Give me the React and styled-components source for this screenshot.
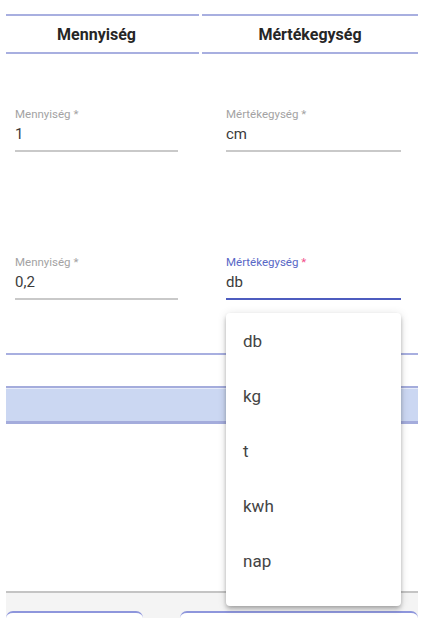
import styled, { createGlobalStyle } from "styled-components";

const GlobalStyle = createGlobalStyle`
  html, body {
    margin: 0;
    padding: 0;
    background: #ffffff;
  }
  body {
    font-family: Roboto, "Noto Sans", Arial, sans-serif;
    -webkit-font-smoothing: antialiased;
  }
`;

const units = ["db", "kg", "t", "kwh", "nap"];

const rows = [
  { amount: "1", unit: "cm", focused: false },
  { amount: "0,2", unit: "db", focused: true },
];

const Page = styled.div`
  width: 412px;
  margin-left: 6px;
  padding-top: 14px;
`;

const Grid = styled.div`
  display: grid;
  grid-template-columns: 193px 216px;
  column-gap: 3px;
`;

const HeaderCell = styled.div`
  height: 36px;
  border-top: 2px solid #a8afe0;
  border-bottom: 2px solid #a8afe0;
  display: flex;
  align-items: center;
  justify-content: center;
  padding-right: ${(p) => (p.$first ? "12px" : "0")};
  font-size: 16px;
  font-weight: 700;
  color: #262626;
`;

const BodyRow = styled(Grid)`
  height: 148px;
  box-sizing: border-box;
  padding-top: 53px;
`;

const Cell = styled.div`
  padding-left: ${(p) => p.$inset}px;
`;

const Field = styled.div`
  position: relative;
  width: ${(p) => p.$width}px;
  padding-bottom: 6px;
  border-bottom: 2px solid ${(p) => (p.$focused ? "#4d5cbf" : "#c9c9c9")};
`;

const Label = styled.div`
  font-size: 11.5px;
  line-height: 14px;
  color: ${(p) => (p.$focused ? "#5867c6" : "#a3a3a3")};
`;

const Required = styled.span`
  color: ${(p) => (p.$focused ? "#f2508a" : "inherit")};
`;

const Value = styled.div`
  margin-top: 3px;
  font-size: 15px;
  line-height: 20px;
  color: #3b3b3b;
`;

const Panel = styled.ul`
  position: absolute;
  top: calc(100% + 15px);
  left: 0;
  width: 100%;
  height: 293px;
  box-sizing: border-box;
  margin: 0;
  padding: 1px 0 18px;
  list-style: none;
  background: #ffffff;
  border-radius: 4px;
  box-shadow: 0 2px 4px -1px rgba(0, 0, 0, 0.2), 0 4px 5px 0 rgba(0, 0, 0, 0.14),
    0 1px 10px 0 rgba(0, 0, 0, 0.12);
  z-index: 10;
`;

const Option = styled.li`
  height: 55px;
  line-height: 55px;
  padding-left: 17px;
  font-size: 17px;
  color: #444444;
`;

const Rule = styled.div`
  margin-top: 3px;
  height: 2px;
  background: #a8afe0;
`;

const Band = styled.div`
  margin-top: 31px;
  height: 33px;
  border-top: 2px solid #a4acdc;
  border-bottom: 3px solid #a4acdc;
  background: #cbd7f2;
  box-shadow: inset 0 1px 0 #e6ebf9;
`;

const Footer = styled.div`
  margin-top: 167px;
  height: 27px;
  box-sizing: border-box;
  padding-top: 18px;
  border-top: 2px solid #c4c4c4;
  background: #f4f4f4;
  display: flex;
  align-items: stretch;
  gap: 37px;
`;

const Tab = styled.div`
  flex: ${(p) => (p.$grow ? "1" : `0 0 ${p.$width}px`)};
  background: #ffffff;
  border-top: 2px solid #8e96dc;
  border-radius: 7px 7px 0 0;
`;

const UnitField = ({ value, focused }) => (
  <Field $width={175} $focused={focused}>
    <Label $focused={focused}>
      Mértékegység <Required $focused={focused}>*</Required>
    </Label>
    <Value>{value}</Value>
    {focused && (
      <Panel>
        {units.map((u) => (
          <Option key={u}>{u}</Option>
        ))}
      </Panel>
    )}
  </Field>
);

const App = () => {
  return (
    <>
      <GlobalStyle />
      <Page>
        <Grid>
          <HeaderCell $first>Mennyiség</HeaderCell>
          <HeaderCell>Mértékegység</HeaderCell>
        </Grid>
        {rows.map((row, i) => (
          <BodyRow key={i}>
            <Cell $inset={9}>
              <Field $width={163}>
                <Label>Mennyiség *</Label>
                <Value>{row.amount}</Value>
              </Field>
            </Cell>
            <Cell $inset={24}>
              <UnitField value={row.unit} focused={row.focused} />
            </Cell>
          </BodyRow>
        ))}
        <Rule />
        <Band />
        <Footer>
          <Tab $width={137} />
          <Tab $grow />
        </Footer>
      </Page>
    </>
  );
};

export default App;
